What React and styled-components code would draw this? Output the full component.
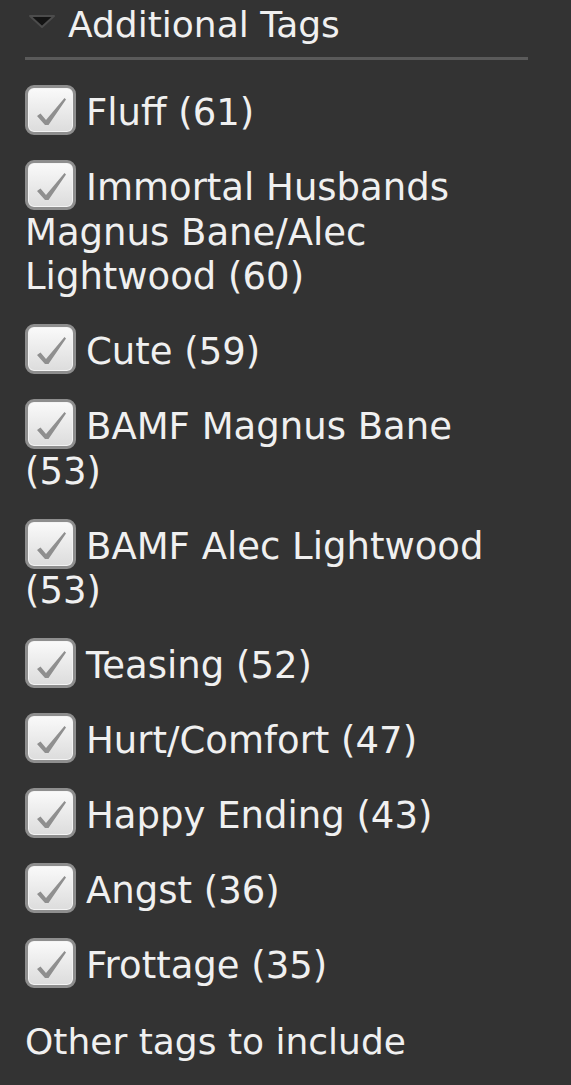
import React from 'react';
import styled, { createGlobalStyle } from 'styled-components';

const GlobalStyle = createGlobalStyle`
  html, body {
    margin: 0;
    padding: 0;
    background: #333333;
  }
  body {
    font-family: "DejaVu Sans", Verdana, sans-serif;
    color: #f0f0f0;
  }
`;

const Panel = styled.div`
  padding: 0 43px 0 25px;
  height: 1085px;
  overflow: hidden;
  box-sizing: border-box;
`;

const Heading = styled.div`
  display: flex;
  align-items: center;
  gap: 12px;
  height: 50px;
  padding-bottom: 7px;
  font-size: 36px;
  line-height: 50px;
  border-bottom: 3px solid #5a5a5a;
  padding-left: 3px;
`;

const Arrow = styled.svg`
  width: 28px;
  height: 16px;
  margin-top: -6px;
`;

const TagList = styled.ul`
  list-style: none;
  margin: 25px 0 0;
  padding: 0;
`;

const Tag = styled.li`
  font-size: 37px;
  line-height: 44.5px;
  margin-bottom: 24.5px;
`;

const Box = styled.span`
  display: inline-block;
  overflow: hidden;
  box-sizing: border-box;
  width: 51px;
  height: 50px;
  margin-right: 10px;
  vertical-align: -10px;
  border: 3px solid #8e8e8e;
  border-radius: 9px;
  background: linear-gradient(#fafafa, #dcdcdc);
  box-shadow: inset 0 0 0 1px #f4f4f4;

  svg {
    display: block;
    width: 100%;
    height: 100%;
  }
`;

const Label = styled.div`
  font-size: 36px;
  line-height: 46px;
  margin-top: 30px;
`;

const Field = styled.div`
  margin-top: 20px;
  height: 40px;
  border: 3px solid #222;
  border-bottom: none;
  border-radius: 10px 10px 0 0;
  background: #2a2a2a;
`;

const Check = () => (
  <svg viewBox="0 0 45 44">
    <path d="M9 28 L12.5 25.5 L18 32 L36.5 10 L38 11.5 L20.5 37 L17 37 Z" fill="#8f8f8f" />
  </svg>
);

const tags = [
  'Fluff (61)',
  'Immortal Husbands Magnus Bane/Alec Lightwood (60)',
  'Cute (59)',
  'BAMF Magnus Bane (53)',
  'BAMF Alec Lightwood (53)',
  'Teasing (52)',
  'Hurt/Comfort (47)',
  'Happy Ending (43)',
  'Angst (36)',
  'Frottage (35)',
];

const App = () => (
  <>
    <GlobalStyle />
    <Panel>
      <Heading>
        <Arrow viewBox="0 0 28 16">
          <polygon points="2,2 26,2 14,13" fill="#141414" stroke="#4c4c4c" strokeWidth="2" strokeLinejoin="round" />
        </Arrow>
        Additional Tags
      </Heading>
      <TagList>
        {tags.map(tag => (
          <Tag key={tag}>
            <Box>
              <Check />
            </Box>
            {tag}
          </Tag>
        ))}
      </TagList>
      <Label>Other tags to include</Label>
      <Field />
    </Panel>
  </>
);

export default App;
